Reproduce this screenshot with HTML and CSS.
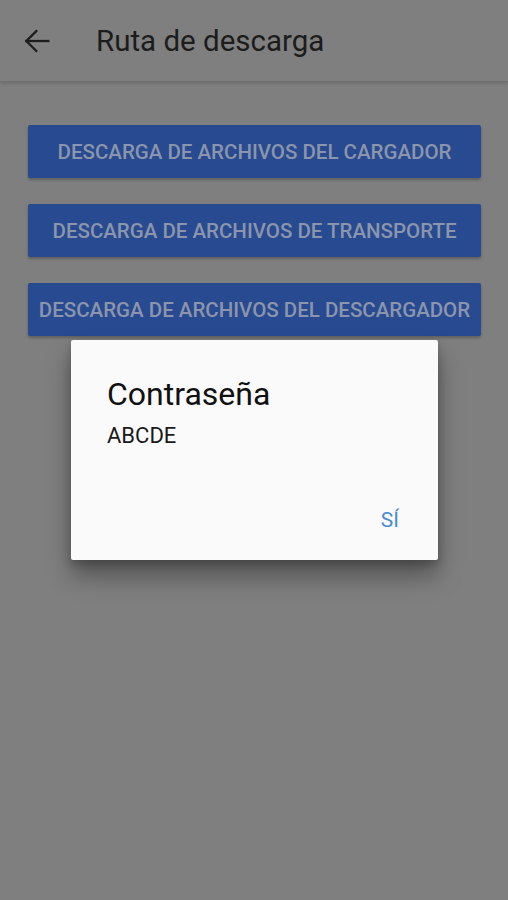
FILE: index.html
```html
<!DOCTYPE html>
<html lang="es">
<head>
    <meta charset="UTF-8">
    <meta name="viewport" content="width=device-width, initial-scale=1.0">
    <title>Ruta de descarga</title>
    <link rel="stylesheet" href="styles.css">
</head>
<body>
    <header class="app-bar">
        <button class="back-btn" aria-label="Volver">
            <svg width="34" height="34" viewBox="0 0 24 24" fill="none" stroke="#1c1c1c" stroke-width="1.6" stroke-linecap="square">
                <path d="M4.5 12H20"/>
                <path d="M11.5 5L4.5 12L11.5 19"/>
            </svg>
        </button>
        <h1 class="app-title">Ruta de descarga</h1>
    </header>

    <main class="content">
        <button class="download-btn">DESCARGA DE ARCHIVOS DEL CARGADOR</button>
        <button class="download-btn">DESCARGA DE ARCHIVOS DE TRANSPORTE</button>
        <button class="download-btn">DESCARGA DE ARCHIVOS DEL DESCARGADOR</button>
    </main>

    <!-- Password dialog -->
    <div class="dialog">
        <h2 class="dialog-title">Contraseña</h2>
        <p class="dialog-text">ABCDE</p>
        <div class="dialog-actions">
            <button class="dialog-btn">SÍ</button>
        </div>
    </div>
</body>
</html>
```

FILE: styles.css
```css
body {
    margin: 0;
    background-color: #7f7f7f;
    font-family: Roboto, "Liberation Sans", sans-serif;
    height: 900px;
    position: relative;
    overflow: hidden;
}

.app-bar {
    height: 81px;
    display: flex;
    align-items: center;
    border-bottom: 1px solid #6f6f6f;
    box-shadow: 0 2px 3px rgba(0, 0, 0, 0.12);
}

.back-btn {
    background: none;
    border: none;
    padding: 0;
    margin-left: 20px;
    width: 34px;
    height: 34px;
    display: flex;
}

.app-title {
    margin: 0 0 0 42px;
    font-size: 29.5px;
    font-weight: 400;
    color: #1c1c1c;
}

.content {
    display: flex;
    flex-direction: column;
    gap: 26px;
    padding: 43px 27px 0 28px;
}

.download-btn {
    height: 53px;
    background-color: #284a91;
    color: #8b95ab;
    border: none;
    border-radius: 2px;
    font-family: Roboto, "Liberation Sans", sans-serif;
    font-size: 20.5px;
    font-weight: 500;
    padding: 0;
    box-shadow: 0 2px 3px rgba(0, 0, 0, 0.25);
}

/* Dialog sits over the dimmed page */
.dialog {
    position: absolute;
    top: 340px;
    left: 71px;
    width: 367px;
    height: 220px;
    box-sizing: border-box;
    background-color: #fafafa;
    border-radius: 2px;
    padding: 35px 36px 0 36px;
    box-shadow: 0 16px 24px rgba(0, 0, 0, 0.35), 0 4px 8px rgba(0, 0, 0, 0.2);
    display: flex;
    flex-direction: column;
}

.dialog-title {
    margin: 0;
    font-size: 32px;
    font-weight: 400;
    color: #111;
}

.dialog-text {
    margin: 10px 0 0;
    font-size: 22px;
    color: #1a1a1a;
}

.dialog-actions {
    display: flex;
    justify-content: flex-end;
    margin-top: auto;
    padding-bottom: 28px;
}

.dialog-btn {
    background: none;
    border: none;
    padding: 0 3px 0 0;
    font-family: Roboto, "Liberation Sans", sans-serif;
    font-size: 21px;
    font-weight: 400;
    color: #4a8ad4;
}
```
